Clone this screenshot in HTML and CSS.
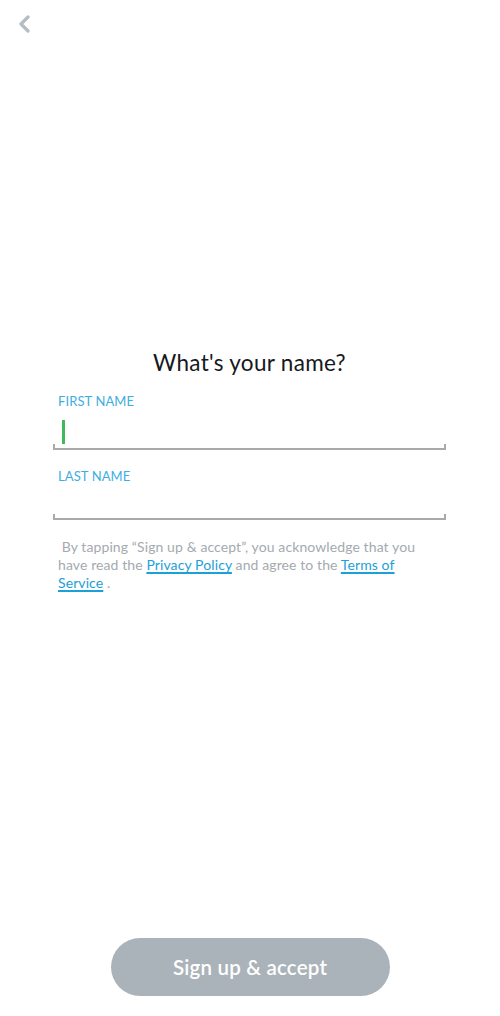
FILE: index.html
```html
<!DOCTYPE html>
<html>
<head>
<meta charset="utf-8">
<link rel="stylesheet" href="styles.css">
</head>
<body>
<div class="screen">
  <div class="topbar">
    <svg class="back" width="14" height="18" viewBox="0 0 14 18"><path d="M11 2 L4 9 L11 16" fill="none" stroke="#b4bcc4" stroke-width="3.2" stroke-linecap="round" stroke-linejoin="round"/></svg>
  </div>
  <div class="form">
    <h1 class="title">What's your name?</h1>
    <div class="field first">
      <div class="label">FIRST NAME</div>
      <div class="input"><span class="cursor"></span></div>
    </div>
    <div class="field last">
      <div class="label">LAST NAME</div>
      <div class="input"></div>
    </div>
    <p class="legal">&nbsp;By tapping “Sign up &amp; accept”, you acknowledge that you have read the <a>Privacy Policy</a> and agree to the <a>Terms of Service</a> .</p>
  </div>
  <div class="spacer"></div>
  <div class="footer">
    <button class="cta">Sign up &amp; accept</button>
  </div>
</div>
</body>
</html>
```

FILE: styles.css
```css
html, body {
  margin: 0;
  padding: 0;
  background: #ffffff;
}
body {
  font-family: Lato, "Noto Sans", sans-serif;
}
.screen {
  width: 500px;
  height: 1016px;
  display: flex;
  flex-direction: column;
}
.topbar {
  height: 50px;
  padding: 15px 0 0 17px;
  box-sizing: border-box;
}
.back { display: block; }
.form {
  padding: 298px 54px 0 53px;
}
.title {
  margin: 0;
  text-align: center;
  font-size: 22.5px;
  font-weight: 400;
  color: #16191c;
  line-height: 30px;
  letter-spacing: 0.3px;
}
.field.first { margin-top: 14px; }
.field.last { margin-top: 17px; }
.label {
  padding-left: 5px;
  font-size: 13px;
  line-height: 18px;
  color: #3daee0;
  letter-spacing: 0.1px;
}
.input {
  border-bottom: 2px solid #a9a9a9;
  position: relative;
}
.first .input { height: 38px; }
.last .input { height: 33px; }
.input::before, .input::after {
  content: "";
  position: absolute;
  bottom: 0;
  width: 2px;
  height: 4px;
  background: #a9a9a9;
}
.input::before { left: 0; }
.input::after { right: 0; }
.cursor {
  position: absolute;
  left: 9px;
  top: 10px;
  width: 3px;
  height: 24px;
  background: #3fba5a;
}
.legal {
  margin: 18px 0 0 5px;
  padding-right: 21px;
  font-size: 14px;
  line-height: 18px;
  color: #a4aab0;
  letter-spacing: 0.1px;
}
.legal a {
  color: #1ba0d8;
  text-decoration: underline;
  text-decoration-thickness: 1.5px;
  text-underline-offset: 2px;
}
.spacer { flex: 1; }
.footer {
  display: flex;
  justify-content: center;
  padding-bottom: 20px;
}
.cta {
  width: 279px;
  height: 58px;
  border: none;
  border-radius: 29px;
  background: #abb3ba;
  color: #ffffff;
  font-family: Lato, "Noto Sans", sans-serif;
  font-size: 20.5px;
  font-weight: 600;
  letter-spacing: 0.2px;
}
```
